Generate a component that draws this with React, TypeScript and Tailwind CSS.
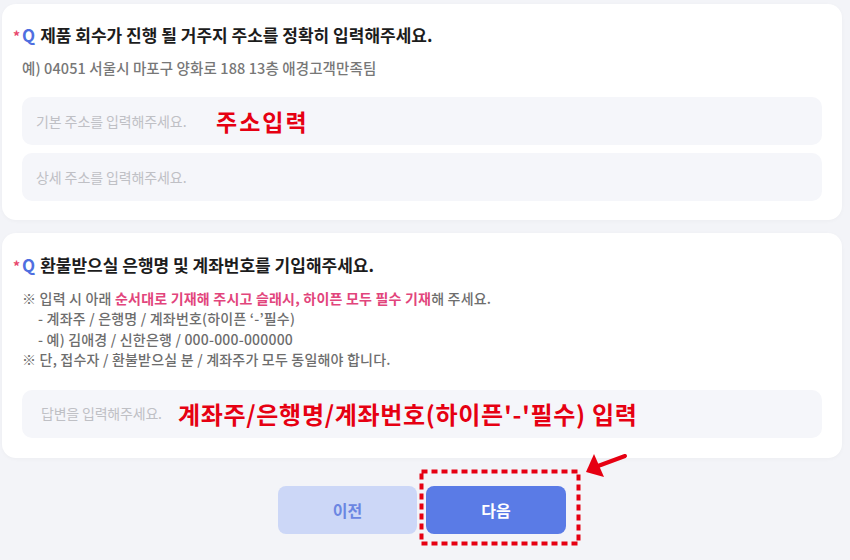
import React from 'react';

const font = { fontFamily: '"Noto Sans CJK KR", "Noto Sans", sans-serif' };

function Question({ text }: { text: string }) {
  return (
    <div className="flex items-center h-[24px] pl-[11px]">
      <span className="text-[#e8476d] text-[14px] font-bold mr-[2px] mt-[2px]">*</span>
      <span className="text-[#4f6fe0] text-[17px] font-bold mr-[5px]">Q</span>
      <span className="text-[#1c1c1c] text-[17px] font-bold">{text}</span>
    </div>
  );
}

export default function App() {
  return (
    <div className="relative w-[850px] h-[560px] bg-[#f3f4f8] overflow-hidden pt-[4px] pl-[2px]" style={font}>
      <div className="w-[840px] bg-white rounded-[14px] shadow-[0_1px_4px_rgba(0,0,0,0.03)] pt-[19px] pb-[19px]">
        <Question text="제품 회수가 진행 될 거주지 주소를 정확히 입력해주세요." />
        <div className="h-[20px] mt-[11px] pl-[20px] text-[14.5px] leading-[20px] text-[#777] font-medium tracking-[0.1px]">
          예) 04051 서울시 마포구 양화로 188 13층 애경고객만족팀
        </div>
        <div className="mt-[19px] flex flex-col gap-[8px]">
          <div className="h-[48px] w-[800px] ml-[20px] rounded-[10px] bg-[#f5f6fa] flex items-center pl-[14px]">
            <span className="text-[14px] text-[#bfc0c5] tracking-[-0.1px] w-[180px]">기본 주소를 입력해주세요.</span>
            <span className="text-[23px] font-bold text-[#e60012] tracking-[2px]">주소입력</span>
          </div>
          <div className="h-[48px] w-[800px] ml-[20px] rounded-[10px] bg-[#f5f6fa] flex items-center pl-[14px]">
            <span className="text-[14px] text-[#bfc0c5] tracking-[-0.1px]">상세 주소를 입력해주세요.</span>
          </div>
        </div>
      </div>

      <div className="w-[840px] mt-[13px] bg-white rounded-[14px] shadow-[0_1px_4px_rgba(0,0,0,0.03)] pt-[20px] pb-[20px]">
        <Question text="환불받으실 은행명 및 계좌번호를 기입해주세요." />
        <div className="mt-[11px] pl-[20px] text-[14px] leading-[20.4px] text-[#6d6d6d] font-medium tracking-[0.2px]">
          <div>
            ※ 입력 시 아래 <span className="text-[#e2457c] font-bold">순서대로 기재해 주시고 슬래시, 하이픈 모두 필수 기재</span>해 주세요.
          </div>
          <div className="pl-[16px]">- 계좌주 / 은행명 / 계좌번호(하이픈 ‘-’필수)</div>
          <div className="pl-[16px]">- 예) 김애경 / 신한은행 / 000-000-000000</div>
          <div>※ 단, 접수자 / 환불받으실 분 / 계좌주가 모두 동일해야 합니다.</div>
        </div>
        <div className="mt-[20px]">
          <div className="h-[48px] w-[800px] ml-[20px] rounded-[10px] bg-[#f5f6fa] flex items-center pl-[19px]">
            <span className="text-[14px] text-[#bfc0c5] tracking-[-0.2px] w-[137px]">답변을 입력해주세요.</span>
            <span className="text-[24px] font-bold text-[#e60012] tracking-[0.7px]">계좌주/은행명/계좌번호(하이픈'-'필수) 입력</span>
          </div>
        </div>
      </div>

      <div className="flex gap-[9px] mt-[28px] ml-[276px]">
        <button className="w-[139px] h-[48px] rounded-[8px] bg-[#ccd7f7] text-[#6b86e2] text-[16px] font-bold">이전</button>
        <button className="w-[140px] h-[48px] rounded-[8px] bg-[#5a7be6] text-white text-[16px] font-bold">다음</button>
      </div>

      <svg className="absolute left-0 top-0 pointer-events-none" width="850" height="560">
        <rect x="421.5" y="471.5" width="157" height="72" fill="none" stroke="#e60012" strokeWidth="4" strokeDasharray="6 4" />
        <line x1="625" y1="456" x2="598" y2="466" stroke="#e60012" strokeWidth="4" strokeLinecap="round" />
        <polygon points="586,472 594,454 604,477" fill="#e60012" />
      </svg>
    </div>
  );
}
